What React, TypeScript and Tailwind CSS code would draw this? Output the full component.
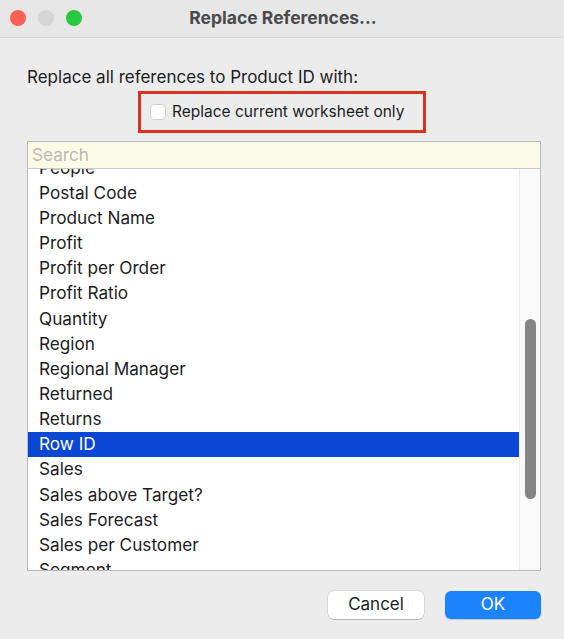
import React from 'react'

const items = [
  'People',
  'Postal Code',
  'Product Name',
  'Profit',
  'Profit per Order',
  'Profit Ratio',
  'Quantity',
  'Region',
  'Regional Manager',
  'Returned',
  'Returns',
  'Row ID',
  'Sales',
  'Sales above Target?',
  'Sales Forecast',
  'Sales per Customer',
  'Segment',
]

export default function App() {
  return (
    <div
      className="flex h-[639px] w-[564px] flex-col bg-[#ececec] text-[#1d1d1d]"
      style={{ fontFamily: 'Inter, "Noto Sans", sans-serif' }}
    >
      {/* title bar */}
      <div className="relative flex h-[38px] shrink-0 items-center justify-center border-b border-[#d6d6d6] bg-[#e7e7e7]">
        <div className="absolute left-[10px] top-[10px] flex gap-[12px]">
          <span className="h-[16px] w-[16px] rounded-full bg-[#fe5f57]" />
          <span className="h-[16px] w-[16px] rounded-full bg-[#d5d5d5]" />
          <span className="h-[16px] w-[16px] rounded-full bg-[#28c840]" />
        </div>
        <span className="pl-[2px] text-[17.5px] font-bold text-[#4a4a4a]">Replace References...</span>
      </div>

      <div className="flex flex-1 flex-col pl-[27px] pr-[23px] pt-[27px]">
        <div className="text-[17px] leading-[24px]">Replace all references to Product ID with:</div>

        <div className="mt-[2px] flex w-[510px] justify-center">
          <div className="flex h-[42px] w-[288px] items-center gap-[6px] border-[3px] border-[#d9321f] pl-[9px]">
            <span className="h-[16px] w-[16px] rounded-[4px] border border-[#cfcfcf] bg-white" />
            <span className="text-[15.5px]">Replace current worksheet only</span>
          </div>
        </div>

        <div className="mt-[8px] flex h-[430px] w-[514px] flex-col border border-[#b9b9b9] bg-white">
          <div className="flex h-[27px] shrink-0 items-center border-b border-[#c9c9c9] bg-[#fcfce6] px-[4px] text-[17.2px] text-[#b9b9b4]">
            Search
          </div>
          <div className="flex flex-1 overflow-hidden">
            <div className="flex-1 overflow-hidden">
              <div className="-mt-[14px]">
                {items.map((it) => (
                  <div
                    key={it}
                    className={
                      'flex h-[25.15px] items-center px-[11px] text-[17.2px] ' +
                      (it === 'Row ID' ? 'bg-[#0b47d5] text-white' : '')
                    }
                  >
                    {it}
                  </div>
                ))}
              </div>
            </div>
            <div className="flex w-[21px] shrink-0 justify-center border-l border-[#ececec] bg-[#fafafa] pt-[150px]">
              <div className="h-[180px] w-[11px] rounded-full bg-[#858585]" />
            </div>
          </div>
        </div>

        <div className="mt-[20px] flex justify-end gap-[21px]">
          <button className="h-[28px] w-[96px] rounded-[6px] bg-white text-[17px] shadow-[0_0_0_0.5px_rgba(0,0,0,0.15),0_1px_1px_rgba(0,0,0,0.15)]">
            Cancel
          </button>
          <button className="h-[28px] w-[96px] rounded-[6px] bg-[#1b83fb] text-[17px] text-white shadow-[0_1px_1px_rgba(0,0,0,0.15)]">
            OK
          </button>
        </div>
      </div>
    </div>
  )
}
